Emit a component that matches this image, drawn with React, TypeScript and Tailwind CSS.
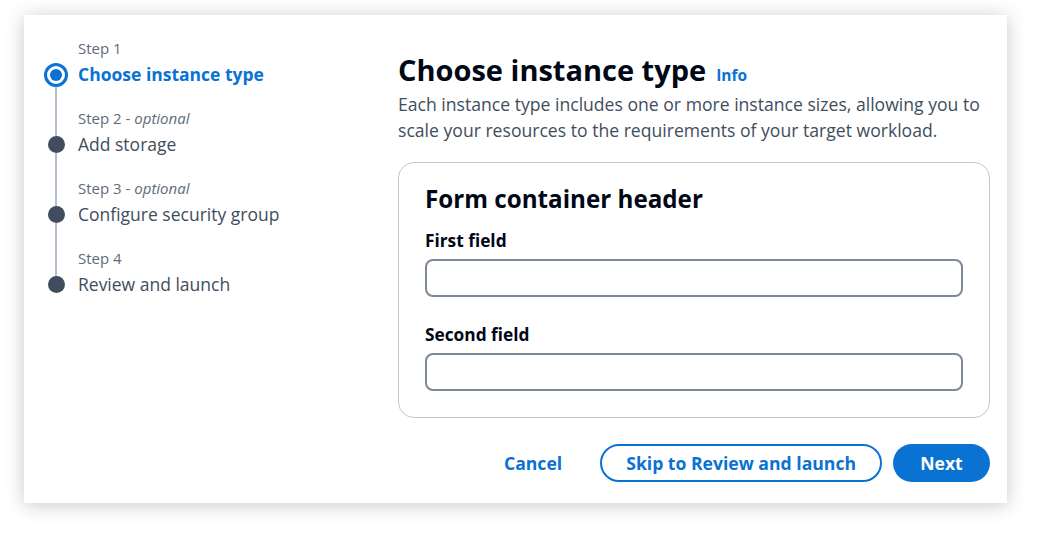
import React from "react";

const steps = [
  { label: "Step 1", optional: false, title: "Choose instance type" },
  { label: "Step 2", optional: true, title: "Add storage" },
  { label: "Step 3", optional: true, title: "Configure security group" },
  { label: "Step 4", optional: false, title: "Review and launch" },
];

function StepMarker({ active }: { active: boolean }) {
  if (active) {
    return (
      <div className="w-[24px] h-[24px] rounded-full border-[3px] border-[#0972d3] flex items-center justify-center shrink-0">
        <div className="w-[12px] h-[12px] rounded-full bg-[#0972d3]" />
      </div>
    );
  }
  return <div className="w-[17px] h-[17px] rounded-full bg-[#414d5c] shrink-0" />;
}

function Field({ label, top }: { label: string; top: string }) {
  return (
    <div className={top}>
      <div className="text-[17.3px] leading-[22px] font-bold text-[#000716]">{label}</div>
      <input className="mt-[7px] block w-full h-[38px] rounded-[8px] border-2 border-[#7d8998] bg-white px-3 outline-none" />
    </div>
  );
}

export default function App() {
  return (
    <div
      className="w-[1038px] h-[538px] bg-white overflow-hidden pt-[15px] pl-[24px]"
      style={{ fontFamily: '"Open Sans", "Noto Sans", sans-serif' }}
    >
      <div className="w-[983px] h-[488px] bg-white shadow-[0_2px_18px_rgba(0,7,22,0.22)] flex">
        {/* wizard navigation */}
        <nav className="w-[374px] shrink-0 pl-[20px] pt-[23px]">
          {steps.map((s, i) => {
            const active = i === 0;
            const last = i === steps.length - 1;
            return (
              <div key={s.label} className="flex">
                <div className="w-[24px] flex flex-col items-center shrink-0">
                  <div className={active ? "h-[25px]" : "h-[28px]"}>
                    {i > 0 && <div className="w-[2px] h-full bg-[#b6bec9]" />}
                  </div>
                  <StepMarker active={active} />
                  <div className="flex-1 flex">
                    {!last && <div className="w-[2px] h-full bg-[#b6bec9]" />}
                  </div>
                </div>
                <div className="ml-[10px] pb-[21px]">
                  <div className="text-[15px] leading-[20px] text-[#5f6b7a]">
                    {s.label}
                    {s.optional && (
                      <>
                        {" - "}
                        <i>optional</i>
                      </>
                    )}
                  </div>
                  <div
                    className={
                      "mt-[3px] text-[17.5px] leading-[26px] " +
                      (active ? "font-bold text-[#0972d3]" : "text-[#414d5c]")
                    }
                  >
                    {s.title}
                  </div>
                </div>
              </div>
            );
          })}
        </nav>

        {/* main content */}
        <main className="w-[592px] pt-[37px]">
          <div className="flex items-baseline gap-[10px]">
            <h1 className="text-[29px] leading-[36px] font-bold text-[#000716]">Choose instance type</h1>
            <a className="text-[15.5px] font-bold text-[#0972d3]">Info</a>
          </div>
          <p className="mt-[3px] text-[17.6px] leading-[26px] text-[#414d5c]">
            Each instance type includes one or more instance sizes, allowing you to scale your resources to the
            requirements of your target workload.
          </p>

          <div className="mt-[19px] h-[256px] rounded-[16px] border border-[#c6c6cd] px-[26px] pt-[21px]">
            <h2 className="text-[24.2px] leading-[30px] font-bold text-[#000716]">Form container header</h2>
            <Field label="First field" top="mt-[16px]" />
            <Field label="Second field" top="mt-[27px]" />
          </div>

          <div className="mt-[26px] flex justify-end items-center">
            <button className="h-[38px] px-[20px] text-[17.6px] font-bold text-[#0972d3]">Cancel</button>
            <button className="ml-[18px] h-[38px] px-[24px] rounded-full border-2 border-[#0972d3] text-[17.6px] font-bold text-[#0972d3]">
              Skip to Review and launch
            </button>
            <button className="ml-[11px] h-[38px] w-[97px] rounded-full bg-[#0972d3] text-[17.6px] font-bold text-white">
              Next
            </button>
          </div>
        </main>
      </div>
    </div>
  );
}
